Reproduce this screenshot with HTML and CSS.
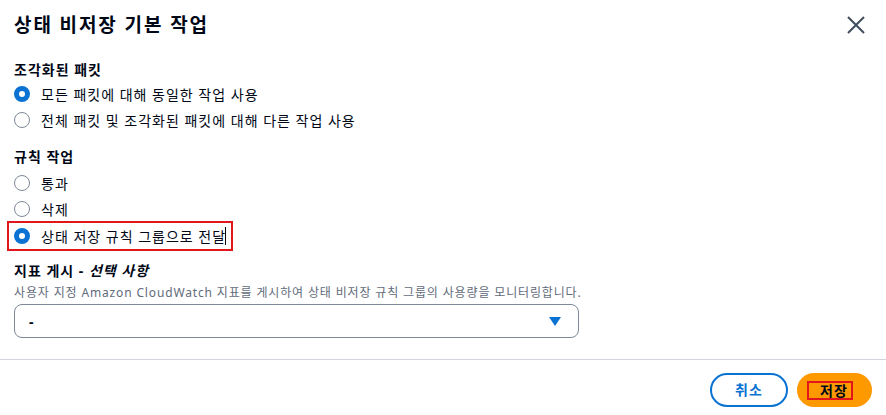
FILE: index.html
```html
<!DOCTYPE html>
<html lang="ko">
<head>
<meta charset="utf-8">
<title>상태 비저장 기본 작업</title>
<link rel="stylesheet" href="styles.css">
</head>
<body>
<div class="modal">
  <div class="header">
    <h1 class="title">상태 비저장 기본 작업</h1>
    <button class="close" aria-label="닫기">
      <svg width="18" height="18" viewBox="0 0 18 18"><path d="M1 1 L17 17 M17 1 L1 17" stroke="#414d5c" stroke-width="2" fill="none"/></svg>
    </button>
  </div>
  <div class="content">
    <div class="group">
      <div class="label">조각화된 패킷</div>
      <div class="radio"><span class="dot checked"></span><span>모든 패킷에 대해 동일한 작업 사용</span></div>
      <div class="radio"><span class="dot"></span><span>전체 패킷 및 조각화된 패킷에 대해 다른 작업 사용</span></div>
    </div>
    <div class="group g2">
      <div class="label">규칙 작업</div>
      <div class="rows">
        <div class="radio"><span class="dot"></span><span>통과</span></div>
        <div class="radio"><span class="dot"></span><span>삭제</span></div>
        <div class="radio hl"><span class="dot checked"></span><span>상태 저장 규칙 그룹으로 전달</span><span class="caret"></span></div>
      </div>
    </div>
    <div class="group g3">
      <div class="label">지표 게시 - <i>선택 사항</i></div>
      <div class="desc">사용자 지정 Amazon CloudWatch 지표를 게시하여 상태 비저장 규칙 그룹의 사용량을 모니터링합니다.</div>
      <div class="select"><span class="val">-</span><span class="arrow"></span></div>
    </div>
  </div>
  <div class="footer">
    <button class="btn cancel">취소</button>
    <button class="btn save"><span class="save-text">저장</span></button>
  </div>
</div>
</body>
</html>
```
FILE: styles.css
```css
* { box-sizing: border-box; }
html, body { margin: 0; padding: 0; background: #fff; }
body {
  font-family: "Noto Sans", "Noto Sans CJK KR", sans-serif;
  color: #000716;
  width: 886px;
  height: 415px;
  overflow: hidden;
}
.header {
  height: 50px;
  padding: 0 14px 0 14px;
  display: flex;
  align-items: center;
  justify-content: space-between;
}
.title {
  margin: 0;
  font-size: 19px;
  font-weight: 700;
  line-height: 24px;
  letter-spacing: 1.9px;
}
.close {
  border: 0;
  background: none;
  padding: 0;
  width: 18px;
  height: 18px;
  margin-right: 7px;
  display: flex;
}
.content { padding: 0 14px; }
.group { padding-top: 9px; }
.g2 { padding-top: 13px; }
.g2 .rows { padding-top: 2px; }
.g3 { padding-top: 11px; }
.label {
  font-size: 14px;
  font-weight: 700;
  line-height: 22px;
  letter-spacing: 1px;
}
.label i { font-weight: 700; }
.radio {
  display: flex;
  align-items: center;
  height: 26px;
  font-size: 14px;
  letter-spacing: 1px;
  gap: 11px;
}
.dot {
  width: 16px;
  height: 16px;
  border-radius: 50%;
  border: 1.5px solid #7d8998;
  flex: none;
}
.dot.checked {
  border: 5px solid #0972d3;
}
.hl {
  outline: 2px solid #e0161b;
  outline-offset: 0;
  margin-left: -5px;
  padding-left: 5px;
  width: 222px;
  height: 26px;
  margin-top: 1px;
}
.caret {
  width: 1px;
  height: 18px;
  background: #000;
  margin-left: -12px;
}
.desc {
  font-size: 12px;
  line-height: 16px;
  color: #5f6b7a;
  margin-top: 3px;
  letter-spacing: 0.85px;
  white-space: nowrap;
}
.select {
  margin-top: 3px;
  width: 565px;
  height: 34px;
  border: 1px solid #7d8998;
  border-radius: 8px;
  display: flex;
  align-items: center;
  justify-content: space-between;
  padding: 0 17px 0 14px;
  font-size: 14px;
}
.val { font-weight: 700; }
.arrow {
  width: 0;
  height: 0;
  border-left: 6px solid transparent;
  border-right: 6px solid transparent;
  border-top: 9px solid #0972d3;
}
.footer {
  margin-top: 21px;
  border-top: 1px solid #d1d5db;
  padding: 13px 14px 0 0;
  display: flex;
  justify-content: flex-end;
  gap: 9px;
}
.btn {
  height: 34px;
  border-radius: 17px;
  font-family: "Noto Sans", "Noto Sans CJK KR", sans-serif;
  font-size: 14px;
  font-weight: 700;
  line-height: 20px;
  letter-spacing: 1px;
  padding: 0;
  display: flex;
  align-items: center;
  justify-content: center;
}
.cancel {
  width: 78px;
  background: #fff;
  border: 2px solid #0972d3;
  color: #0972d3;
}
.save {
  width: 75px;
  background: #ff9900;
  border: 2px solid #ff9900;
  color: #000716;
}
.save-text {
  outline: 2px solid #e0161b;
  padding: 0 3px 0 11px;
  margin-right: 9px;
  line-height: 15px;
  display: inline-block;
}
```
